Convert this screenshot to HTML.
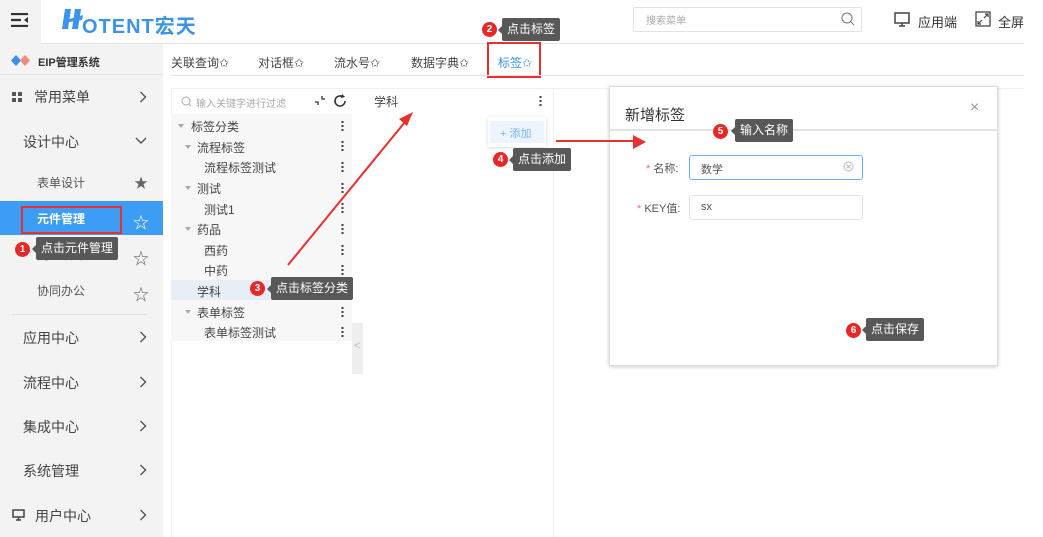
<!DOCTYPE html>
<html><head><meta charset="utf-8"><style>
*{margin:0;padding:0;box-sizing:border-box}
body{width:1043px;height:537px;overflow:hidden;background:#fff;font-family:"Liberation Sans","Noto Sans CJK SC",sans-serif;position:relative;color:#333}
.a{position:absolute;white-space:nowrap}
.t{font-size:12px;color:#444}
.dots{position:absolute;width:3px;height:11px;background:radial-gradient(circle,#444 1.1px,transparent 1.3px) 0 0/3px 4px repeat-y}
.tip{position:absolute;background:#585858;color:#fff;font-size:12px;height:23px;line-height:23px;padding:0 5px;border-radius:2px}
.tip:before{content:"";position:absolute;left:-4px;top:8px;border:4px solid transparent;border-left:0;border-right-color:#585858}
.bd{position:absolute;width:15px;height:15px;border-radius:50%;background:#e82727;color:#fff;font-size:10px;text-align:center;line-height:15px;font-weight:bold}
.side{font-size:14px;color:#444}
.chev{position:absolute;width:8px;height:12px}
.caret{position:absolute;width:0;height:0;border-left:3px solid transparent;border-right:3px solid transparent;border-top:4px solid #aaa}
.star{position:absolute;font-size:14px;color:#666}
</style></head><body>
<svg width="0" height="0" style="position:absolute"><defs><path id="cv" d="M1.5 1l5 5-5 5" stroke="#555" stroke-width="1.4" fill="none"/></defs></svg>
<!-- top bar -->
<div class="a" style="left:0;top:0;width:41px;height:44px;background:#f3f3f3"></div>
<svg class="a" style="left:11px;top:13px" width="18" height="14"><path d="M0 1h17M0 7h10M0 13h17" stroke="#333" stroke-width="2.2"/><path d="M17 4l-4 3 4 3z" fill="#333"/></svg>
<svg class="a" style="left:61px;top:7px" width="22" height="25"><path d="M4 2h6l-3 20H1z M14 2h6l-3 20h-6z" fill="#3d94e6"/><path d="M2 14l20-6-1 5-19 3z" fill="#3d94e6"/></svg>
<div class="a" style="left:82px;top:10px;font-size:20px;font-weight:bold;color:#3d94e6;letter-spacing:1px">OTENT宏天</div>
<div class="a" style="left:633px;top:7px;width:229px;height:25px;border:1px solid #e3e3e3;border-radius:2px"></div>
<div class="a" style="left:646px;top:12px;font-size:10px;color:#aaa">搜索菜单</div>
<svg class="a" style="left:841px;top:12px" width="14" height="14"><circle cx="6" cy="6" r="5" fill="none" stroke="#777"/><path d="M10 10l3 3" stroke="#777"/></svg>
<svg class="a" style="left:894px;top:12px" width="16" height="15"><rect x="1" y="1" width="14" height="10" fill="none" stroke="#444" stroke-width="1.5"/><path d="M5 14h6M8 11v3" stroke="#444" stroke-width="1.5"/></svg>
<div class="a" style="left:918px;top:12px;font-size:13px;color:#333">应用端</div>
<svg class="a" style="left:975px;top:11px" width="16" height="16"><rect x="1" y="1" width="14" height="14" fill="none" stroke="#444" stroke-width="1.3"/><path d="M9 7l4-4M10 3h3v3M7 9l-4 4M3 10v3h3" stroke="#444" stroke-width="1.2" fill="none"/></svg>
<div class="a" style="left:998px;top:12px;font-size:13px;color:#333">全屏</div>
<div class="a" style="left:41px;top:43px;width:983px;height:1px;background:#e6e6e6"></div>
<!-- sidebar -->
<div class="a" style="left:0;top:44px;width:163px;height:493px;background:#f3f3f3"></div>
<svg class="a" style="left:10px;top:54px" width="22" height="13"><path d="M6 1l-5 5.5 5 5.5 5-5.5z" fill="#3b8ef0"/><path d="M15 1l-5 5.5 5 5.5 5-5.5z" fill="#f08a80"/></svg>
<div class="a" style="left:38px;top:54px;font-size:11px;font-weight:bold;color:#333">EIP管理系统</div>
<div class="a" style="left:0;top:74px;width:163px;height:1px;background:#e3e3e3"></div>
<svg class="a" style="left:12px;top:92px" width="10" height="10"><rect x="0" y="0" width="4" height="4" fill="#555"/><rect x="6" y="0" width="4" height="4" fill="#555"/><rect x="0" y="6" width="4" height="4" fill="#555"/><rect x="6" y="6" width="4" height="4" fill="#555"/></svg>
<div class="a side" style="left:34px;top:87px">常用菜单</div><svg class="chev" style="left:139px;top:91px"><use href="#cv"/></svg>
<div class="a side" style="left:23px;top:132px">设计中心</div><svg class="a" style="left:135px;top:137px" width="12" height="8"><path d="M1 1l5 5 5-5" stroke="#555" stroke-width="1.4" fill="none"/></svg>
<div class="a" style="left:37px;top:174px;font-size:12px;color:#555">表单设计</div><div class="star" style="left:134px;top:173px">★</div>
<div class="a" style="left:0;top:201px;width:163px;height:34px;background:#3d9df5"></div>
<div class="a" style="left:37px;top:210px;font-size:12px;color:#fff;font-weight:bold">元件管理</div><div class="star" style="left:133px;top:209px;color:#fff;font-size:16px">☆</div>
<div class="a" style="left:21px;top:206px;width:101px;height:28px;border:2px solid #e83030"></div>
<div class="a" style="left:37px;top:246px;font-size:12px;color:#666">门户设计</div><div class="star" style="left:133px;top:245px;font-size:16px">☆</div>
<div class="a" style="left:37px;top:282px;font-size:12px;color:#555">协同办公</div><div class="star" style="left:133px;top:281px;font-size:16px">☆</div>
<div class="a" style="left:12px;top:314px;width:135px;height:1px;background:#ddd"></div>
<div class="a side" style="left:23px;top:328px">应用中心</div><svg class="chev" style="left:139px;top:331px"><use href="#cv"/></svg>
<div class="a side" style="left:23px;top:373px">流程中心</div><svg class="chev" style="left:139px;top:376px"><use href="#cv"/></svg>
<div class="a side" style="left:23px;top:417px">集成中心</div><svg class="chev" style="left:139px;top:420px"><use href="#cv"/></svg>
<div class="a side" style="left:23px;top:461px">系统管理</div><svg class="chev" style="left:139px;top:464px"><use href="#cv"/></svg>
<svg class="a" style="left:12px;top:509px" width="13" height="12"><rect x="1" y="1" width="11" height="7" fill="none" stroke="#444" stroke-width="1.5"/><path d="M4 11h5M6.5 8v3" stroke="#444" stroke-width="1.5"/></svg>
<div class="a side" style="left:35px;top:506px">用户中心</div><svg class="chev" style="left:139px;top:509px"><use href="#cv"/></svg>
<!-- tabs -->
<div class="a t" style="left:171px;top:54px">关联查询✩</div>
<div class="a t" style="left:258px;top:54px">对话框✩</div>
<div class="a t" style="left:334px;top:54px">流水号✩</div>
<div class="a t" style="left:411px;top:54px">数据字典✩</div>
<div class="a t" style="left:498px;top:54px;color:#3d94e6">标签✩</div>
<div class="a" style="left:487px;top:42px;width:54px;height:36px;border:2px solid #e83030"></div>
<div class="a" style="left:171px;top:75px;width:853px;height:1px;background:#e3e3e3"></div>
<!-- panels -->
<div class="a" style="left:171px;top:88px;width:1px;height:449px;background:#eee"></div>
<div class="a" style="left:171px;top:88px;width:853px;height:1px;background:#f0f0f0"></div>
<svg class="a" style="left:181px;top:96px" width="11" height="11"><circle cx="5" cy="5" r="4" fill="none" stroke="#aaa"/><path d="M8 8l2 2" stroke="#aaa"/></svg>
<div class="a" style="left:196px;top:95px;font-size:10px;color:#aaa">输入关键字进行过滤</div>
<svg class="a" style="left:314px;top:95px" width="12" height="11"><path d="M1 7h3v3M8 1v3h3" stroke="#333" stroke-width="1.3" fill="none"/></svg>
<svg class="a" style="left:333px;top:94px" width="14" height="14"><path d="M12 7a5 5 0 1 1-2-4" stroke="#333" stroke-width="1.6" fill="none"/><path d="M9 0l3 3-4 1z" fill="#333"/></svg>
<div class="a" style="left:171px;top:114px;width:181px;height:227px;background:#f7f7f7"></div>
<div class="a" style="left:171px;top:280px;width:181px;height:20px;background:#e8eef6"></div>
<div class="caret" style="left:178px;top:124px"></div><div class="a t" style="left:191px;top:118px">标签分类</div>
<div class="caret" style="left:185px;top:145px"></div><div class="a t" style="left:197px;top:139px">流程标签</div>
<div class="a t" style="left:204px;top:159px">流程标签测试</div>
<div class="caret" style="left:185px;top:186px"></div><div class="a t" style="left:197px;top:180px">测试</div>
<div class="a t" style="left:204px;top:201px">测试1</div>
<div class="caret" style="left:185px;top:227px"></div><div class="a t" style="left:197px;top:221px">药品</div>
<div class="a t" style="left:204px;top:242px">西药</div>
<div class="a t" style="left:204px;top:262px">中药</div>
<div class="a t" style="left:197px;top:283px">学科</div>
<div class="caret" style="left:185px;top:310px"></div><div class="a t" style="left:197px;top:304px">表单标签</div>
<div class="a t" style="left:204px;top:324px">表单标签测试</div>
<div class="dots" style="left:341px;top:120px"></div><div class="dots" style="left:341px;top:140px"></div><div class="dots" style="left:341px;top:161px"></div><div class="dots" style="left:341px;top:182px"></div><div class="dots" style="left:341px;top:202px"></div><div class="dots" style="left:341px;top:223px"></div><div class="dots" style="left:341px;top:244px"></div><div class="dots" style="left:341px;top:264px"></div><div class="dots" style="left:341px;top:306px"></div><div class="dots" style="left:341px;top:326px"></div>
<div class="a" style="left:352px;top:323px;width:11px;height:51px;background:#eee"></div>
<div class="a" style="left:354px;top:340px;font-size:11px;color:#bbb">&lt;</div>
<div class="a t" style="left:374px;top:93px">学科</div>
<div class="dots" style="left:539px;top:95px"></div>
<div class="a" style="left:553px;top:88px;width:1px;height:449px;background:#eee"></div>
<div class="a" style="left:488px;top:117px;width:58px;height:30px;background:#fff;box-shadow:0 1px 4px rgba(0,0,0,.15)"></div>
<div class="a" style="left:490px;top:121px;width:54px;height:22px;background:#ecf5ff"></div>
<div class="a" style="left:500px;top:125px;font-size:11px;color:#7ab4f0">+ 添加</div>
<!-- dialog -->
<div class="a" style="left:609px;top:86px;width:389px;height:280px;background:#fff;border:1px solid #ddd;box-shadow:0 1px 4px rgba(0,0,0,.2)"></div>
<div class="a" style="left:625px;top:104px;font-size:15px;color:#333">新增标签</div>
<div class="a" style="left:970px;top:99px;font-size:16px;color:#999">×</div>
<div class="a" style="left:609px;top:129px;width:389px;height:2px;background:#e3e3e3"></div>
<div class="a" style="left:646px;top:160px;font-size:11px;color:#555"><span style="color:#f56c6c">*</span> 名称:</div>
<div class="a" style="left:689px;top:155px;width:174px;height:25px;border:1px solid #6aaef5;border-radius:3px"></div>
<div class="a" style="left:701px;top:161px;font-size:11px;color:#555">数学</div>
<svg class="a" style="left:843px;top:161px" width="11" height="11"><circle cx="5.5" cy="5.5" r="4.5" fill="none" stroke="#bbb"/><path d="M3.5 3.5l4 4M7.5 3.5l-4 4" stroke="#bbb"/></svg>
<div class="a" style="left:637px;top:200px;font-size:11px;color:#555"><span style="color:#f56c6c">*</span> KEY值:</div>
<div class="a" style="left:689px;top:195px;width:174px;height:25px;border:1px solid #e3e3e3;border-radius:3px"></div>
<div class="a" style="left:701px;top:201px;font-size:11px;color:#555">sx</div>
<!-- arrows -->
<svg class="a" style="left:0;top:0" width="1043" height="537"><path d="M288 265L405 122" stroke="#e83030" stroke-width="2"/><path d="M413 112l-14 7 8 7z" fill="#e83030"/><path d="M556 141L636 141" stroke="#e83030" stroke-width="2"/><path d="M646 142l-13-7v14z" fill="#e83030"/></svg>
<!-- tooltips -->
<div class="bd" style="left:15px;top:242px">1</div><div class="tip" style="left:36px;top:237px">点击元件管理</div>
<div class="bd" style="left:482px;top:22px">2</div><div class="tip" style="left:502px;top:18px">点击标签</div>
<div class="bd" style="left:250px;top:281px">3</div><div class="tip" style="left:271px;top:277px">点击标签分类</div>
<div class="bd" style="left:493px;top:152px">4</div><div class="tip" style="left:513px;top:148px">点击添加</div>
<div class="bd" style="left:713px;top:124px">5</div><div class="tip" style="left:735px;top:119px">输入名称</div>
<div class="bd" style="left:846px;top:323px">6</div><div class="tip" style="left:866px;top:318px">点击保存</div>
</body></html>
